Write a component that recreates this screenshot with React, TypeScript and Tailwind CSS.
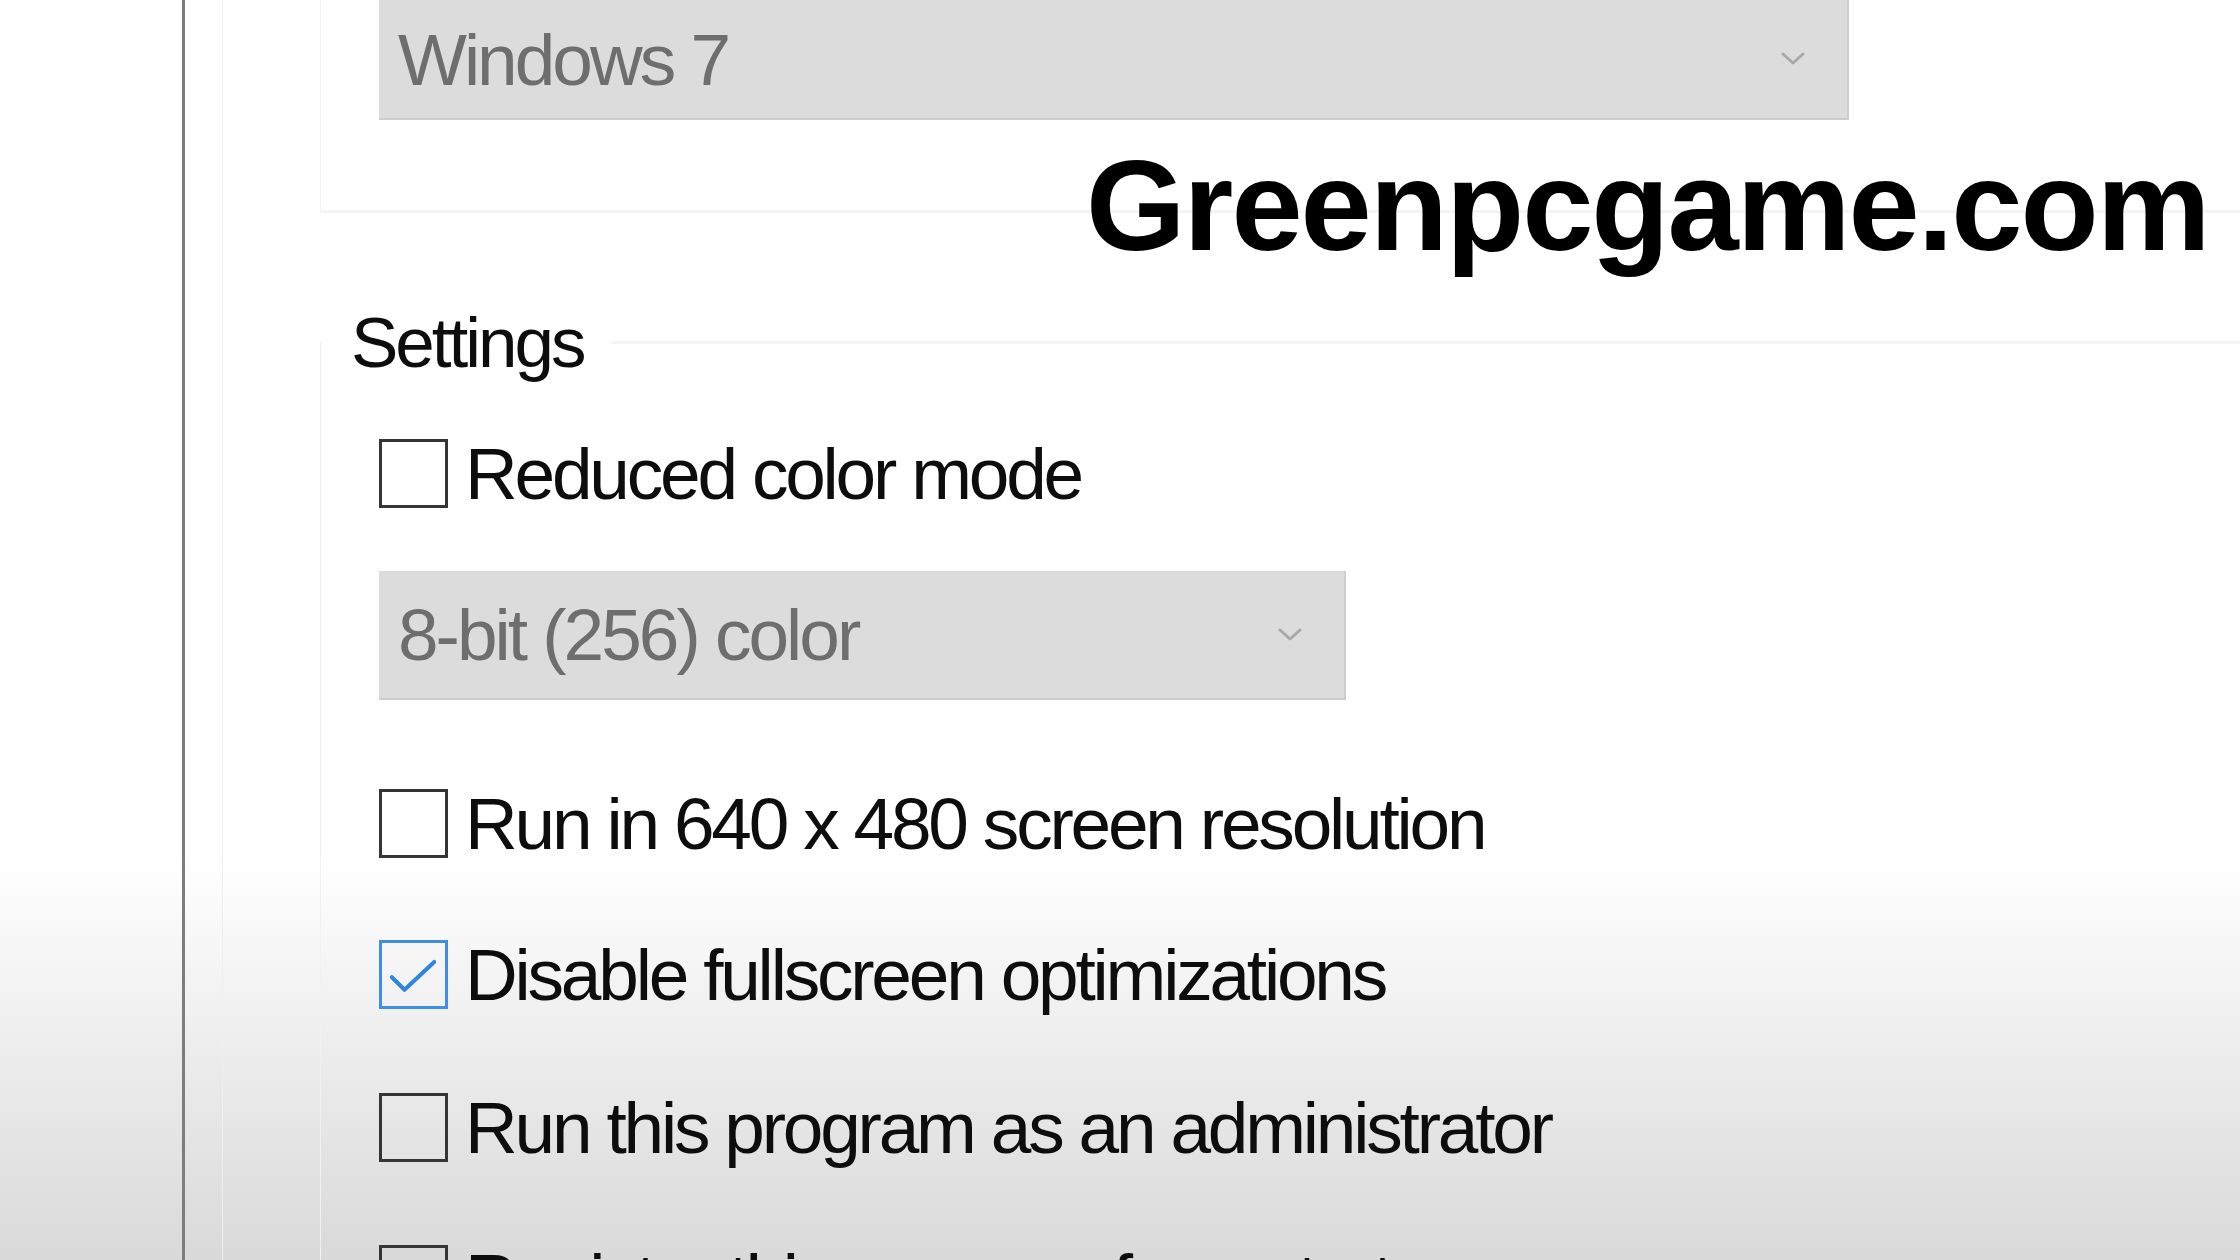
import React from "react";

const Chevron = () => (
  <svg width="24" height="14" viewBox="0 0 24 14" fill="none">
    <path
      d="M2 2 L12 11 L22 2"
      stroke="#a8a8a8"
      strokeWidth="3"
      strokeLinecap="round"
      strokeLinejoin="round"
    />
  </svg>
);

const Dropdown = ({
  label,
  className,
}: {
  label: string;
  className: string;
}) => (
  <div
    className={
      "flex shrink-0 items-center justify-between bg-[#dcdcdc] border-r-2 border-b-2 border-[#cdcdcd] pl-[19px] pr-[42px] " +
      className
    }
  >
    <span className="text-[73px] leading-none tracking-[-3px] text-[#6e6e6e]">
      {label}
    </span>
    <Chevron />
  </div>
);

const CheckRow = ({
  label,
  checked = false,
  className = "",
}: {
  label: string;
  checked?: boolean;
  className?: string;
}) => (
  <div className={"flex shrink-0 items-center h-[69px] " + className}>
    <div
      className={
        "w-[69px] h-[69px] shrink-0 border-[3px] " +
        (checked ? "border-[#3c8fe2]" : "border-[#353535]")
      }
    >
      {checked && (
        <svg width="63" height="63" viewBox="0 0 70 70" fill="none">
          <path
            d="M11 38 L25 52 L58 21"
            stroke="#2f86dc"
            strokeWidth="4.5"
            strokeLinecap="round"
            strokeLinejoin="round"
          />
        </svg>
      )}
    </div>
    <span className="ml-[17px] text-[73px] leading-none tracking-[-3.2px] text-[#0d0d0d] whitespace-nowrap">
      {label}
    </span>
  </div>
);

export default function App() {
  return (
    <div className="relative w-[2240px] h-[1260px] overflow-hidden bg-linear-to-b from-white from-68% to-[#d9d9d9] font-['Liberation_Sans',Arial,sans-serif]">
      <div className="flex h-full">
        <div className="w-[182px] shrink-0" />
        <div className="w-[3px] shrink-0 bg-[#7d7d7d]" />
        <div className="w-[37px] shrink-0" />
        <div className="w-px shrink-0 bg-[#efefef]" />
        <div className="w-[97px] shrink-0" />

        <main className="flex-1 flex flex-col min-h-0">
          {/* compatibility mode group */}
          <section className="h-[213px] shrink-0 border-l border-b-[3px] border-[#f4f4f4] pl-[58px]">
            <Dropdown label="Windows 7" className="w-[1470px] h-[120px]" />
          </section>

          {/* settings group */}
          <section className="mt-[129px] flex-1 min-h-0 flex flex-col border-l border-[#f1f1f1] pl-[58px]">
            <div className="-mt-[30px] -ml-[58px] h-[60px] shrink-0 flex items-center">
              <span className="ml-[30px] text-[71px] leading-none tracking-[-3px] text-[#0d0d0d]">
                Settings
              </span>
              <div className="ml-[27px] flex-1 h-[3px] bg-[#f5f5f5]" />
            </div>

            <CheckRow label="Reduced color mode" className="mt-[67px]" />
            <Dropdown
              label="8-bit (256) color"
              className="mt-[63px] w-[967px] h-[129px]"
            />
            <CheckRow
              label="Run in 640 x 480 screen resolution"
              className="mt-[89px]"
            />
            <CheckRow
              label="Disable fullscreen optimizations"
              checked
              className="mt-[82px]"
            />
            <CheckRow
              label="Run this program as an administrator"
              className="mt-[84px]"
            />
            <CheckRow
              label="Register this program for restart"
              className="mt-[83px]"
            />
          </section>
        </main>
      </div>

      {/* watermark */}
      <div className="absolute left-[1086px] top-[142px] text-[128px] leading-none font-bold tracking-[-2px] text-black whitespace-nowrap">
        Greenpcgame.com
      </div>
    </div>
  );
}
